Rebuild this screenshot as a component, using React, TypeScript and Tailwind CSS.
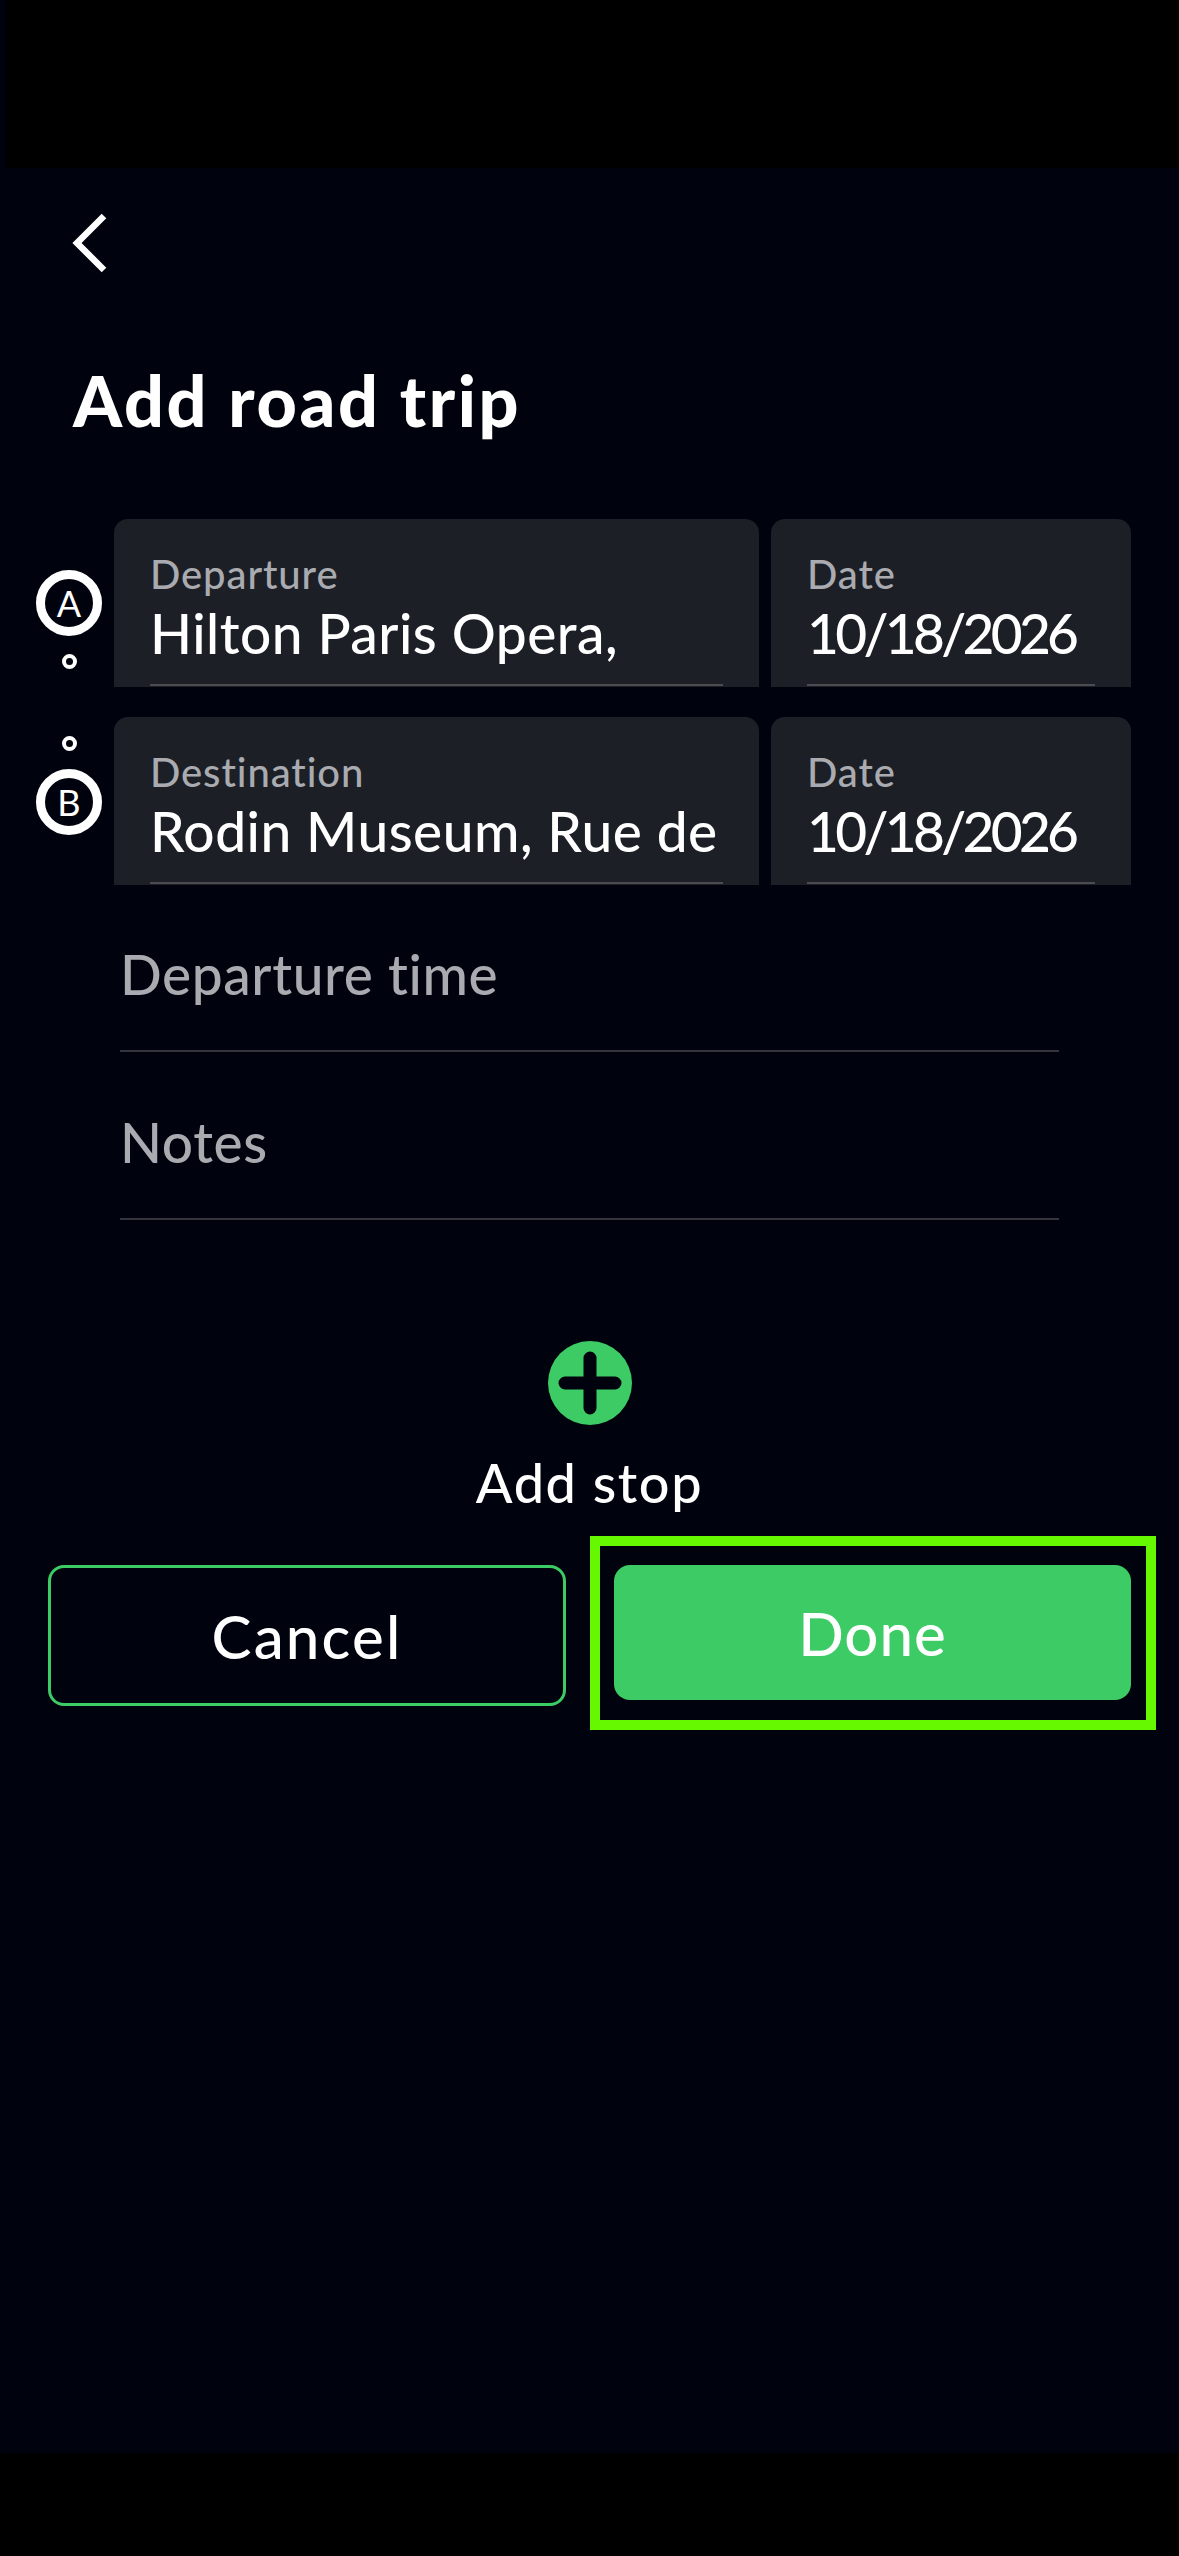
const font = "font-['Lato','Noto_Sans',sans-serif]";

function Marker({ letter }: { letter: string }) {
  return (
    <div className="w-[66px] h-[66px] rounded-full border-[9px] border-white flex items-center justify-center text-white text-[36px] leading-none">
      {letter}
    </div>
  );
}

function Dot() {
  return <div className="w-[15px] h-[15px] rounded-full border-[4px] border-white" />;
}

function Field({
  label,
  value,
  width,
  lineWidth,
  valueClass,
}: {
  label: string;
  value: string;
  width: string;
  lineWidth: string;
  valueClass: string;
}) {
  return (
    <div className={`${width} h-[168px] bg-[#1c1f26] rounded-t-[14px] pl-[36px] flex flex-col`}>
      <div className="mt-[31px] text-[40px] leading-[48px] text-[#a9abb0] font-medium tracking-[0.9px]">{label}</div>
      <div className={`mt-[4px] text-[55px] leading-[62px] text-white font-medium whitespace-nowrap ${valueClass}`}>{value}</div>
      <div className={`${lineWidth} mt-auto mb-[1px] h-[2px] bg-[#4a4c51]`} />
    </div>
  );
}

function Row({ label, value, children, top }: { label: string; value: string; children: React.ReactNode; top: boolean }) {
  return (
    <div className="flex gap-[12px] pl-[36px]">
      <div className={`w-[66px] flex flex-col items-center gap-[18px] ${top ? "pt-[51px]" : "pt-[19px]"}`}>
        {children}
      </div>
      <div className="flex gap-[12px]">
        <Field label={label} value={value} width="w-[645px]" lineWidth="w-[573px]" valueClass="tracking-[0.5px]" />
        <Field label="Date" value="10/18/2026" width="w-[360px]" lineWidth="w-[288px]" valueClass="tracking-[-3.7px]" />
      </div>
    </div>
  );
}

function PlainField({ text }: { text: string }) {
  return (
    <div className="ml-[120px] w-[939px] h-[167px] border-b-2 border-[#33353a] flex flex-col justify-end pb-[44px]">
      <div className="text-[55px] leading-[64px] text-[#a9abb0] font-medium tracking-[0.6px]">{text}</div>
    </div>
  );
}

export default function App() {
  return (
    <div className={`w-[1179px] h-[2556px] bg-[#00030d] flex flex-col overflow-hidden ${font}`}>
      <div className="ml-[5px] h-[168px] bg-black shrink-0" />

      <div className="flex-1 flex flex-col">
        <svg className="ml-[72px] mt-[45px]" width="36" height="60" viewBox="0 0 36 60" fill="none">
          <polyline points="32,3 5,30 32,57" stroke="white" strokeWidth="6.5" />
        </svg>

        <h1 className="ml-[73px] mt-[87px] text-[70px] leading-[80px] font-black text-white tracking-[2.6px]">Add road trip</h1>

        <div className="mt-[79px] flex flex-col gap-[30px]">
          <Row label="Departure" value="Hilton Paris Opera," top>
            <Marker letter="A" />
            <Dot />
          </Row>
          <Row label="Destination" value="Rodin Museum, Rue de" top={false}>
            <Dot />
            <Marker letter="B" />
          </Row>
        </div>

        <div className="flex flex-col gap-px">
          <PlainField text="Departure time" />
          <PlainField text="Notes" />
        </div>

        <div className="mt-[121px] flex flex-col items-center">
          <svg width="84" height="84" viewBox="0 0 84 84">
            <circle cx="42" cy="42" r="42" fill="#3ccb64" />
            <path d="M42 17V67M17 42H67" stroke="#00030d" strokeWidth="13" strokeLinecap="round" />
          </svg>
          <div className="mt-[26px] mb-[-2px] text-[54px] leading-[64px] text-white font-medium tracking-[1.6px]">Add stop</div>
        </div>

        <div className="mt-[52px] ml-[48px] flex items-start gap-[48px]">
          <button className="w-[518px] h-[141px] rounded-[16px] border-[3px] border-[#3ccb64] text-white text-[60px] font-medium leading-none tracking-[2.2px]">
            Cancel
          </button>
          <div className="relative">
            <button className="w-[517px] h-[135px] rounded-[16px] bg-[#3ccb64] text-white text-[60px] font-medium leading-none tracking-[1px]">
              Done
            </button>
            <div className="absolute left-[-24px] top-[-29px] w-[566px] h-[194px] border-[10px] border-[#66f800]" />
          </div>
        </div>
      </div>

      <div className="h-[103px] bg-black shrink-0" />
    </div>
  );
}
